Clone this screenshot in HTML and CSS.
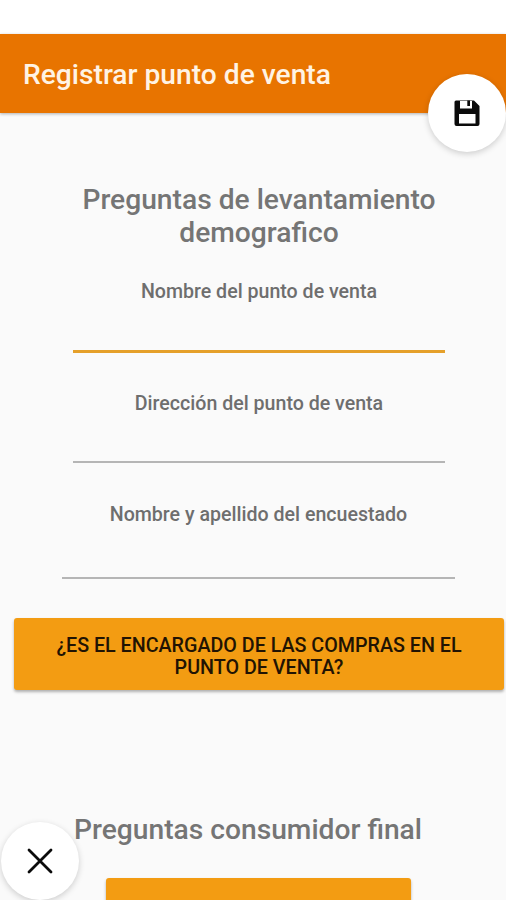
FILE: index.html
```html
<!DOCTYPE html>
<html lang="es">
<head>
<meta charset="utf-8">
<title>Registrar punto de venta</title>
<link rel="stylesheet" href="styles.css">
</head>
<body>
<header class="bar"><h1>Registrar punto de venta</h1></header>
<main class="form">
  <h2 class="heading">Preguntas de levantamiento<br>demografico</h2>
  <label class="field active"><span>Nombre del punto de venta</span><input type="text"></label>
  <label class="field"><span>Dirección del punto de venta</span><input type="text"></label>
  <label class="field wide"><span>Nombre y apellido del encuestado</span><input type="text"></label>
  <button class="btn">¿ES EL ENCARGADO DE LAS COMPRAS EN EL<br>PUNTO DE VENTA?</button>
  <h2 class="heading second">Preguntas consumidor final</h2>
  <button class="btn small" aria-label="Siguiente"></button>
</main>
<button class="fab save" aria-label="Guardar"><svg width="26" height="26" viewBox="0 0 26 26"><path fill="#0b0b0b" fill-rule="evenodd" d="M2 0.5H20L25.5 6V24Q25.5 26 23.5 26H2.5Q0.5 26 0.5 24V2Q0.5 0.5 2 0.5ZM6 0V8.5H18V0ZM5 14V23.5H21.5V14Z"/><path fill="#0b0b0b" d="M13.3 0.5H16V6H13.3Z"/></svg></button>
<button class="fab close" aria-label="Cerrar"><svg width="26" height="26" viewBox="0 0 26 26"><path d="M2 2L24 24M24 2L2 24" stroke="#0b0b0b" stroke-width="2.8" stroke-linecap="round"/></svg></button>
</body>
</html>
```
FILE: styles.css
```css
* { box-sizing: border-box; }
body { margin: 0; padding-top: 34px; height: 900px; overflow: hidden; position: relative; background: #fff; font-family: Roboto, "Liberation Sans", sans-serif; }
.bar { height: 79px; background: #e87400; display: flex; align-items: center; padding: 2px 0 0 23px; box-shadow: 0 1px 3px rgba(0,0,0,.3); position: relative; }
h1 { margin: 0; font-size: 28.2px; font-weight: 500; color: #fff3e4; white-space: nowrap; }
.form { height: 787px; background: #fafafa; display: flex; flex-direction: column; align-items: center; padding: 70px 0 0 12px; overflow: hidden; }
.heading { margin: 0 0 29px; font-size: 28.2px; line-height: 33px; font-weight: 500; color: #757575; text-align: center; white-space: nowrap; }
.field { flex: none; width: 372px; height: 111.5px; padding-top: 1px; display: flex; flex-direction: column; text-align: center; font-size: 19.6px; line-height: 26px; font-weight: 500; color: #6e6e6e; white-space: nowrap; }
.field input { width: 100%; height: 46px; border: 0; border-bottom: 2px solid #b5b5b5; background: none; outline: 0; padding: 0; }
.field.active input { height: 48px; border-bottom: 3px solid #e5a02a; }
.field.wide { width: 393px; height: 117px; margin-right: 1px; }
.field.wide input { height: 51px; }
.btn { flex: none; width: 490px; height: 72px; border: 0; border-radius: 3px; background: #f39c12; color: #211303; font: 500 19.7px/22px Roboto, "Liberation Sans", sans-serif; box-shadow: 0 2px 3px rgba(0,0,0,.3); padding: 5px 0 0; white-space: nowrap; }
.heading.second { margin: 123px 22px 32px 0; }
.btn.small { width: 305px; margin-right: 1px; }
.fab { position: absolute; width: 78px; height: 78px; border: 0; border-radius: 50%; background: #fff; display: flex; align-items: center; justify-content: center; padding: 0; box-shadow: 0 2px 6px rgba(0,0,0,.18); }
.save { left: 428px; top: 74px; }
.close { left: 1px; top: 822px; }
```
